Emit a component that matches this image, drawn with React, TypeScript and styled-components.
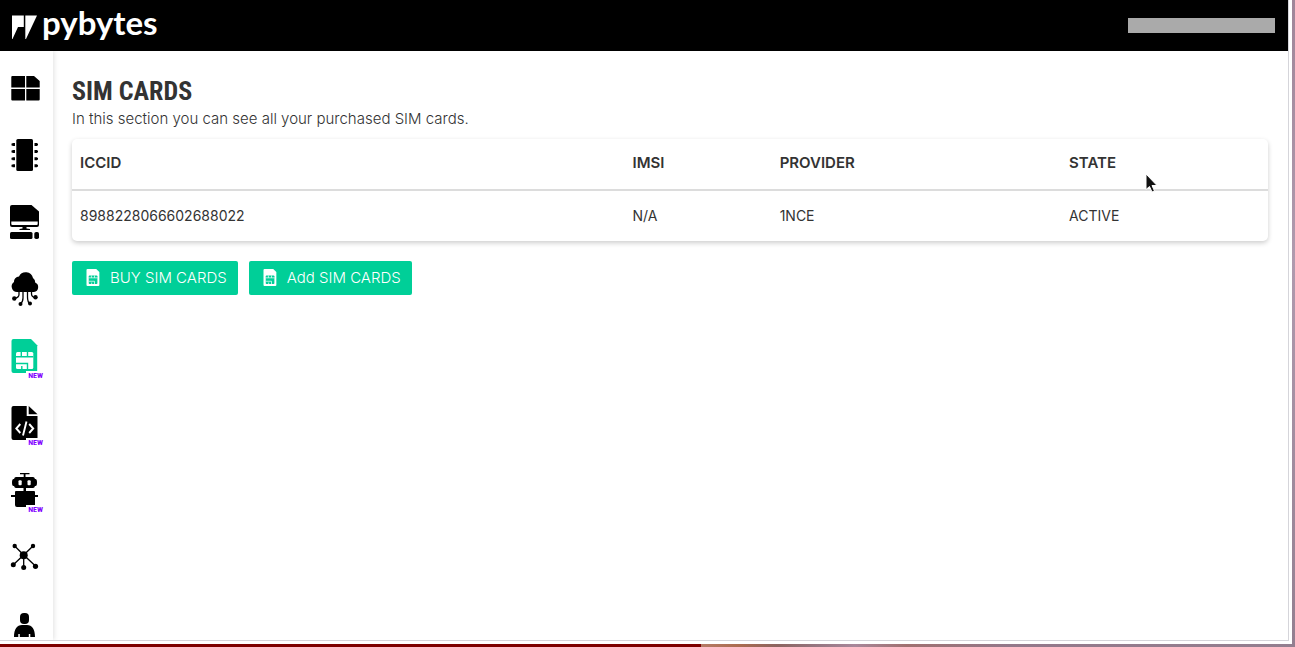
import React from "react";
import styled, { createGlobalStyle, css } from "styled-components";

const ink = "#333333";
const green = "#00cf98";
const textFont = `Inter, "Open Sans", sans-serif`;
const narrowFont = `"Liberation Sans Narrow", "Roboto Condensed", "Liberation Sans", sans-serif`;

const GlobalStyle = createGlobalStyle`
  *, *::before, *::after { box-sizing: border-box; }
  body { margin: 0; background: #fff; color: ${ink}; font-family: ${textFont}; }
`;

const Desktop = styled.div`
  display: flex;
  flex-direction: column;
  height: 100vh;
  overflow: hidden;
  background: linear-gradient(#a08699, #b09aae 40%, #937f90);
`;

const Wallpaper = styled.div`
  flex: none;
  height: 3px;
  background: linear-gradient(
    90deg,
    #7d0000 0 54.1%,
    #b57a66 54.1%,
    #ac6c50 57%,
    #8c6460 60%,
    #957580 63%,
    #a8879a 66%,
    #a07070 70%,
    #93788a 78%,
    #937f90
  );
`;

const Frame = styled.div`
  display: flex;
  flex: 1;
  min-height: 0;
  margin-right: 3px;
  padding: 0 3px 3px 0;
  background: #fff;
`;

const Page = styled.div`
  display: flex;
  flex: 1;
  flex-direction: column;
  min-width: 0;
  border: solid #d5d5da;
  border-width: 0 1px 1px 0;
`;

const TopBar = styled.header`
  display: flex;
  flex: none;
  align-items: center;
  justify-content: space-between;
  height: 51px;
  padding: 0 13px 0 12px;
  background: #000;
`;

const Brand = styled.a`
  display: flex;
  align-items: center;
  gap: 4px;
  height: 51px;
  padding-bottom: 7px;
  color: #fff;
  font: 700 33px/40px Lato, sans-serif;
  text-decoration: none;

  svg {
    margin-top: 11px;
  }
`;

const Account = styled.div`
  width: 147px;
  height: 15px;
  background: #aaa;
`;

const Body = styled.div`
  display: flex;
  flex: 1;
  min-height: 0;
`;

const Sidebar = styled.nav`
  flex: none;
  width: 53px;
  padding-top: 4px;
  box-shadow: 1px 0 5px rgba(0, 0, 0, 0.12);
  clip-path: inset(0 -8px 0 0);
`;

const SideList = styled.ul`
  height: calc(100% - 3px);
  margin: 0;
  padding: 0;
  overflow: hidden;
  list-style: none;
`;

const SideLink = styled.a<{ $active?: boolean }>`
  position: relative;
  display: flex;
  align-items: center;
  height: 67px;
  color: ${(p) => (p.$active ? green : "#000")};
`;

const NewBadge = styled.span`
  position: absolute;
  right: 9px;
  bottom: 10px;
  padding: 0 1px 0 2px;
  background: #fff;
  color: #7f00ff;
  font: 700 8px/9px ${narrowFont};
`;

const Main = styled.main`
  flex: 1;
  min-width: 0;
  padding: 24px 20px 0 19px;
`;

const Title = styled.h1`
  margin: 0;
  font: 700 26px/32px ${narrowFont};
`;

const Lead = styled.p`
  margin: 0 0 8px;
  font-size: 15px;
  font-weight: 300;
  line-height: 24px;
`;

const TableCard = styled.div`
  border-radius: 5px;
  box-shadow: 0 2px 5px rgba(0, 0, 0, 0.2);
  overflow: hidden;
`;

const SimTable = styled.table`
  width: 100%;
  border-collapse: collapse;
  table-layout: fixed;
  font-size: 14px;
  line-height: 20px;
  text-align: left;
`;

const cell = css`
  height: 50px;
  padding: 0 8px;
`;

const HeadCell = styled.th<{ $width?: string }>`
  ${cell}
  width: ${(p) => p.$width ?? "auto"};
  height: 52px;
  padding-bottom: 4px;
  box-shadow: inset 0 -2px #dcdcdc;
  font-size: 15px;
  font-weight: 600;
`;

const Cell = styled.td`
  ${cell}
`;

const Actions = styled.div`
  display: flex;
  gap: 11px;
  margin-top: 20px;
`;

const ActionButton = styled.button`
  display: flex;
  align-items: center;
  gap: 9px;
  height: 34px;
  padding: 0 11px 0 13px;
  border: 0;
  border-radius: 2px;
  background: ${green};
  color: #fff;
  font: 300 15px/20px ${textFont};
  cursor: pointer;
`;

const Pointer = styled.svg`
  position: absolute;
  left: 1145px;
  top: 173px;
  pointer-events: none;
`;

const SimShape = ({ hole }: { hole: string }) => (
  <>
    <path d="M13.5 6H31l6.200 6.200V38a2 2 0 0 1-2 2H13.500a2 2 0 0 1-2-2V8a2 2 0 0 1 2-2z" fill="currentColor" />
    <rect x="16" y="19" width="17.300" height="17" rx="1.500" fill={hole} />
    <path d="M21.300 19v4.700M27.500 19v4.700M16 23.700h17.300M16 30.500h11.500V36M21.800 33v3" stroke="currentColor" strokeWidth="1.400" fill="none" />
  </>
);

const icons: Record<string, React.ReactNode> = {
  dashboard: (
    <path d="M12.300 11H25v11.500H11.300V12a1 1 0 0 1 1-1zM26.300 11H34l5.700 5v6.500H26.300zM11.300 24H25v11.500H12.300a1 1 0 0 1-1-1zM26.300 24h13.400v10.500a1 1 0 0 1-1 1H26.300z" />
  ),
  devices: (
    <>
      <rect x="16.300" y="7" width="16.700" height="32" rx="1.500" />
      {[11, 18, 25.3, 32.3].map((y) => (
        <React.Fragment key={y}>
          <path d={`M11.500 ${y + 0.500}h1v-.5h2.500v3h-2.500v-.5h-1z`} />
          <path d={`M38 ${y + 0.500}h-1v-.5h-2.500v3h2.500v-.5h1z`} />
        </React.Fragment>
      ))}
    </>
  ),
  projects: (
    <>
      <path d="M12 6h19.500l7.500 6.500V26a2 2 0 0 1-2 2H12a2 2 0 0 1-2-2V8a2 2 0 0 1 2-2z" />
      <path d="M11.300 22.500h26.400V25a1 1 0 0 1-1 1H12.300a1 1 0 0 1-1-1z" fill="#fff" />
      <path d="M22.500 28h4v1.500l3.500.5v1H19.500v-1l3-.5z" />
      <rect x="10" y="33" width="22.500" height="7" rx="1.500" />
      <rect x="34.300" y="33" width="4.700" height="7" rx="1.800" />
    </>
  ),
  cloud: (
    <>
      <path d="M17 26a5.500 5.500 0 0 1-3-10 5 5 0 0 1 5-5.500A7.500 7.500 0 0 1 33 12a5 5 0 0 1 2.200 4.500A5 5 0 0 1 34 26z" />
      <path d="M19 25v3.500q0 3-4.500 4M23 25v7q0 4-2.700 6M27.500 25v6q0 5 2.500 7M31.500 25v3q0 3 3.800 3.500" fill="none" stroke="currentColor" strokeWidth="1.300" />
      <circle cx="14.300" cy="32.500" r="2.200" />
      <circle cx="20.500" cy="38" r="2" />
      <circle cx="30" cy="37.500" r="2" />
      <circle cx="35.500" cy="31.300" r="2.200" />
    </>
  ),
  sim: <SimShape hole="#fff" />,
  code: (
    <>
      <path d="M13.500 6h13.200v10h10.800v22a2 2 0 0 1-2 2h-22a2 2 0 0 1-2-2V8a2 2 0 0 1 2-2z" />
      <path d="M28.700 6l8.800 8.300h-8.800z" />
      <path d="M20.300 24l-4 4.500 4 4.500M29.200 24l4 4.500-4 4.500M26.500 21.500L23 35.500" fill="none" stroke="#fff" strokeWidth="1.900" />
    </>
  ),
  robot: (
    <>
      <path d="M20 6h9.500v1.300h-4V10h-1.800V7.300H20z" />
      <path d="M16 10h17q1.500 0 2 2h.5q1.500 0 1.500 3.500T35.500 19H35q-.5 2-2 2H16q-1.500 0-2-2h-.5q-1.500 0-1.500-3.500t1.500-3.500h.5q.5-2 2-2z" />
      <rect x="18.500" y="13.200" width="3.200" height="5" rx="1" fill="#fff" />
      <rect x="27.500" y="13.200" width="3.200" height="5" rx="1" fill="#fff" />
      <path d="M23.500 21h2.500v3h8q1 0 1 1v3h3v2h-3v8q0 2-2 2H17q-2 0-2-2v-8h-4v-2h4v-3q0-1 1-1h7.500z" />
    </>
  ),
  network: (
    <>
      <path d="M14.700 12l9 9 9.300-9M13.300 30.700l10.400-9.700 12 11.300M23.700 21v12.500" fill="none" stroke="currentColor" strokeWidth="1.300" />
      <circle cx="23.700" cy="21.200" r="4" />
      <circle cx="14.700" cy="12" r="2.200" />
      <circle cx="33" cy="12" r="2.200" />
      <circle cx="13.300" cy="30.700" r="2.500" />
      <circle cx="23.700" cy="33.500" r="2.500" />
      <circle cx="35.500" cy="32.300" r="2.600" />
    </>
  ),
  profile: (
    <>
      <rect x="20" y="12" width="9" height="11" rx="4" />
      <path d="M14 36c0-8 3-12 8-12h5c5 0 8 4 8 12h-4.700v-3h-1.500v3h-9v-3h-1.500v3z" />
    </>
  ),
};

const links = [
  { id: "dashboard", label: "Dashboard" },
  { id: "devices", label: "Devices" },
  { id: "projects", label: "Projects" },
  { id: "cloud", label: "Integrations" },
  { id: "sim", label: "SIM cards", active: true, fresh: true },
  { id: "code", label: "Code", fresh: true },
  { id: "robot", label: "Machine learning", fresh: true },
  { id: "network", label: "Networks" },
  { id: "profile", label: "Account" },
];

const ButtonIcon = () => (
  <svg width="16" height="18" viewBox="10 6 29 36" aria-hidden="true">
    <SimShape hole={green} />
  </svg>
);

export default function App() {
  return (
    <Desktop>
      <GlobalStyle />
      <Frame>
        <Page>
          <TopBar>
            <Brand href="#">
              <svg width="26" height="25" viewBox="0 0 26 25" fill="#fff" aria-hidden="true">
                <path d="M0 .5h11.800V12H6L.5 24H0z" />
                <path d="M13.300.5H25L14 24h-.7z" />
              </svg>
              pybytes
            </Brand>
            <Account />
          </TopBar>
          <Body>
            <Sidebar>
              <SideList>
                {links.map((l) => (
                  <li key={l.id}>
                    <SideLink href={`#${l.id}`} aria-label={l.label} $active={l.active}>
                      <svg width="48" height="47" viewBox="0 0 48 47" fill="currentColor" aria-hidden="true">
                        {icons[l.id]}
                      </svg>
                      {l.fresh && <NewBadge>NEW</NewBadge>}
                    </SideLink>
                  </li>
                ))}
              </SideList>
            </Sidebar>
            <Main>
              <Title>SIM CARDS</Title>
              <Lead>In this section you can see all your purchased SIM cards.</Lead>
              <TableCard>
                <SimTable>
                  <thead>
                    <tr>
                      <HeadCell $width="46.2%">ICCID</HeadCell>
                      <HeadCell $width="12.3%">IMSI</HeadCell>
                      <HeadCell $width="24.2%">PROVIDER</HeadCell>
                      <HeadCell>STATE</HeadCell>
                    </tr>
                  </thead>
                  <tbody>
                    <tr>
                      <Cell>8988228066602688022</Cell>
                      <Cell>N/A</Cell>
                      <Cell>1NCE</Cell>
                      <Cell>ACTIVE</Cell>
                    </tr>
                  </tbody>
                </SimTable>
              </TableCard>
              <Actions>
                <ActionButton type="button">
                  <ButtonIcon />
                  BUY SIM CARDS
                </ActionButton>
                <ActionButton type="button">
                  <ButtonIcon />
                  Add SIM CARDS
                </ActionButton>
              </Actions>
            </Main>
          </Body>
        </Page>
      </Frame>
      <Wallpaper />
      <Pointer width="14" height="21" viewBox="0 0 14 21" aria-hidden="true">
        <path d="M1 1v15.500l3.500-3 2.500 5.500 2.500-1-2.500-5.500h5z" fill="#111" stroke="#fff" />
      </Pointer>
    </Desktop>
  );
}
